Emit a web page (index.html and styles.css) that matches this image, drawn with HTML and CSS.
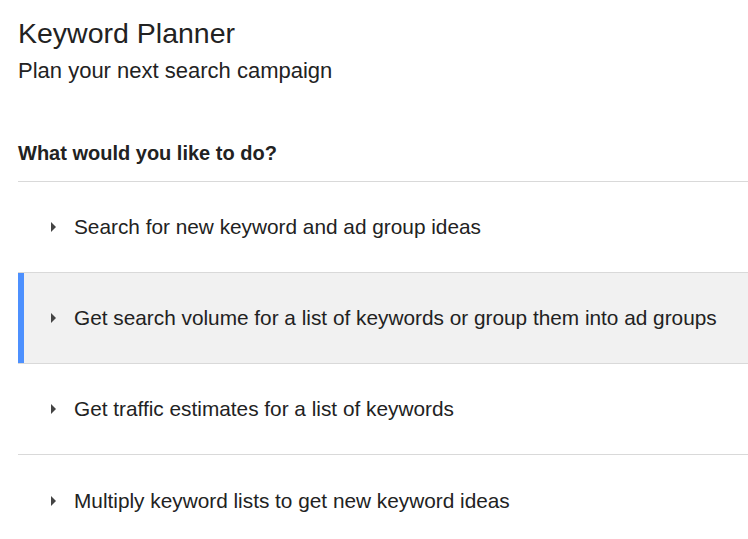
FILE: index.html
```html
<!DOCTYPE html>
<html>
<head>
<meta charset="utf-8">
<link rel="stylesheet" href="styles.css">
</head>
<body>
<div class="page">
  <h1 class="title">Keyword Planner</h1>
  <p class="subtitle">Plan your next search campaign</p>
  <h2 class="question">What would you like to do?</h2>
  <ul class="options">
    <li class="option"><span class="arrow"></span><span class="label">Search for new keyword and ad group ideas</span></li>
    <li class="option active"><span class="arrow"></span><span class="label">Get search volume for a list of keywords or group them into ad groups</span></li>
    <li class="option"><span class="arrow"></span><span class="label">Get traffic estimates for a list of keywords</span></li>
    <li class="option"><span class="arrow"></span><span class="label">Multiply keyword lists to get new keyword ideas</span></li>
  </ul>
</div>
</body>
</html>
```
FILE: styles.css
```css
html, body {
  margin: 0;
  padding: 0;
  background: #ffffff;
}
body {
  font-family: "Liberation Sans", Arial, sans-serif;
  color: #222222;
}
.page {
  padding: 17px 0 0 18px;
}
.title {
  margin: 0;
  font-size: 28.5px;
  font-weight: normal;
  line-height: 32px;
  color: #222;
}
.subtitle {
  margin: 9px 0 0 0;
  font-size: 22px;
  line-height: 26px;
  color: #222;
}
.question {
  margin: 57px 0 0 0;
  font-size: 20px;
  font-weight: bold;
  line-height: 24px;
  color: #222;
}
.options {
  list-style: none;
  margin: 16px 0 0 0;
  padding: 0;
  border-top: 1px solid #d9d9d9;
}
.option {
  display: flex;
  align-items: center;
  height: 91px;
  box-sizing: border-box;
  border-bottom: 1px solid #d9d9d9;
  padding-left: 33px;
  font-size: 20.8px;
  color: #222;
}
.option:last-child {
  border-bottom: none;
}
.option.active {
  background: #f1f1f1;
  box-shadow: inset 6px 0 0 #4d90fe;
}
.arrow {
  width: 0;
  height: 0;
  border-top: 5px solid transparent;
  border-bottom: 5px solid transparent;
  border-left: 5px solid #444;
  margin-right: 18px;
}
```
